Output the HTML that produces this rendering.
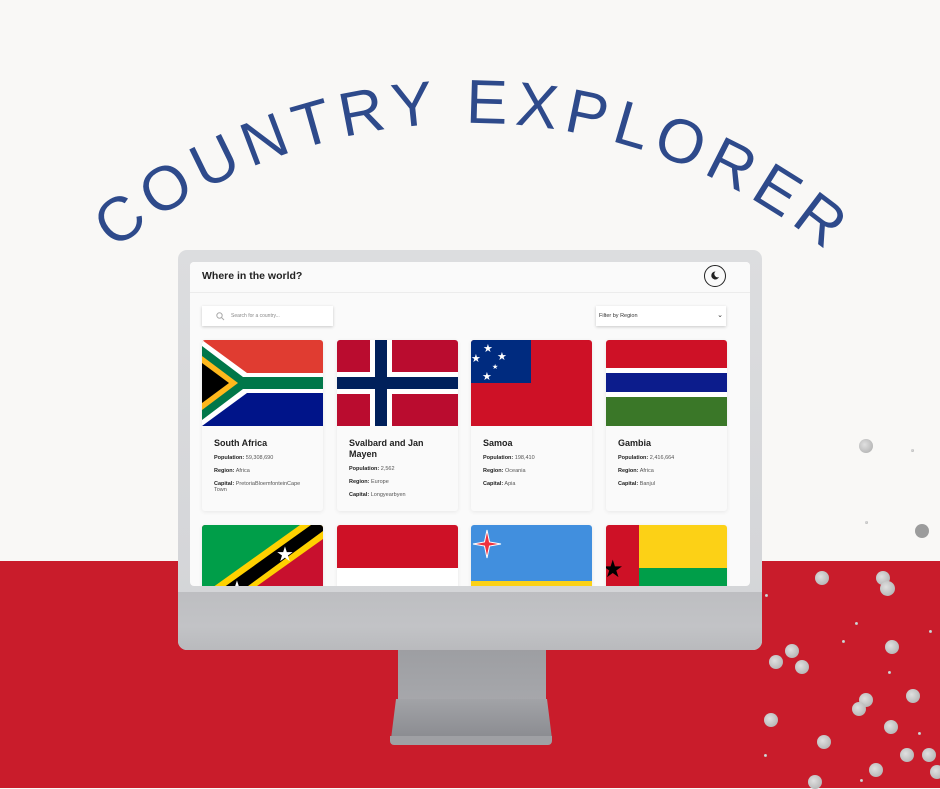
<!DOCTYPE html>
<html><head><meta charset="utf-8"><style>
*{margin:0;padding:0;box-sizing:border-box}
body{width:940px;height:788px;overflow:hidden;background:#f9f8f6;position:relative;font-family:"Liberation Sans",sans-serif}
.abs{position:absolute}
.red{left:0;top:561px;width:940px;height:227px;background:#c91c2b}
.bezel{left:178px;top:250px;width:584px;height:400px;border-radius:9px;background:linear-gradient(#dcdddf,#d3d4d7);}
.chin{left:178px;top:592px;width:584px;height:58px;border-radius:0 0 9px 9px;background:linear-gradient(#bdbec1,#c2c3c6 60%,#b9babd)}
.screen{left:190px;top:262px;width:560px;height:324px;background:#fafafa;border-radius:4px;overflow:hidden}
.hdr{left:0;top:0;width:560px;height:31px;background:#fafafa;border-bottom:1px solid #ececec}
.hdr h1{position:absolute;left:12px;top:8px;font-size:10.5px;font-weight:bold;color:#222}
.moon{left:514px;top:3px;width:22px;height:22px;border:1.5px solid #222;border-radius:50%}
.search{left:12px;top:44px;width:131px;height:20px;background:#fff;box-shadow:0 1px 3px rgba(0,0,0,.2);font-size:5px;color:#888;padding:7px 0 0 29px}
.sel{left:406px;top:44px;width:130px;height:20px;background:#fff;box-shadow:0 1px 3px rgba(0,0,0,.2);font-size:5.5px;color:#333;padding:7px 0 0 3px}
.card{width:121px;height:171px;background:#fafafa;box-shadow:0 1px 4px rgba(0,0,0,.08);border-radius:3px;overflow:hidden}
.card svg{display:block}
.card h2{font-size:9px;font-weight:bold;color:#222;margin:12px 0 0 12px;line-height:11px;width:100px}
.card p{font-size:5.5px;color:#555;margin:6px 0 0 12px;line-height:7px;width:100px}
.card p b{color:#222}
.dot{position:absolute;border-radius:50%;background:radial-gradient(circle at 40% 40%,#e0e0e0,#a9a9a9)}
</style></head><body>
<div class="abs red"></div>
<svg class="abs" style="left:0;top:0" width="940" height="300">
<defs><path id="arc" d="M74,287 A560,560 0 0 1 866,287"/></defs>
<text font-family="Liberation Sans, sans-serif" font-size="62" fill="#2e4a8b" text-anchor="middle" textLength="770" lengthAdjust="spacing"><textPath href="#arc" startOffset="50%">COUNTRY EXPLORER</textPath></text>
</svg>
<!-- stand -->
<div class="abs" style="left:398px;top:648px;width:148px;height:52px;background:linear-gradient(#9d9ea2,#a6a7ab)"></div>
<div class="abs" style="left:391px;top:699px;width:161px;height:40px;background:linear-gradient(#a2a3a7,#8a8b90);clip-path:polygon(5px 0,156px 0,161px 40px,0 40px)"></div>
<div class="abs" style="left:390px;top:736px;width:162px;height:9px;border-radius:0 0 4px 4px;background:#9fa0a4"></div>
<div class="abs bezel"></div>
<div class="abs chin"></div>
<div class="abs screen">
 <div class="abs hdr"><h1>Where in the world?</h1>
  <div class="abs moon"><svg width="19" height="19" viewBox="0 0 19 19"><path d="M10.5 5.5a4 4 0 1 0 3.5 5.5a3.3 3.3 0 0 1-3.5-5.5z" fill="#222"/></svg></div></div>
 <div class="abs search"><svg class="abs" style="left:14px;top:6px" width="9" height="9"><circle cx="3.5" cy="3.5" r="2.7" fill="none" stroke="#aaa" stroke-width="1"/><path d="M5.5 5.5L8 8" stroke="#aaa"/></svg>Search for a country...</div>
 <div class="abs sel">Filter by Region<span style="position:absolute;right:3px;top:5px;font-size:7px">&#8964;</span></div>
 <div class="abs card" style="left:12px;top:78px">
  <svg width="121" height="86" viewBox="0 0 121 86" preserveAspectRatio="none">
   <rect width="121" height="43" fill="#e03c31"/><rect y="43" width="121" height="43" fill="#001489"/>
   <path d="M0 0L45 33H121V53H45L0 86Z" fill="#fff"/><path d="M0 6L41 37H121V49H41L0 80Z" fill="#007749"/>
   <path d="M0 16L36 43L0 70Z" fill="#ffb81c"/><path d="M0 23L27 43L0 63Z" fill="#000"/></svg>
  <h2>South Africa</h2><p><b>Population:</b> 59,308,690</p><p><b>Region:</b> Africa</p><p style="line-height:6px"><b>Capital:</b> PretoriaBloemfonteinCape Town</p></div>
 <div class="abs card" style="left:147px;top:78px">
  <svg width="121" height="86" viewBox="0 0 121 86" preserveAspectRatio="none">
   <rect width="121" height="86" fill="#ba0c2f"/><rect x="33" width="22" height="86" fill="#fff"/><rect y="32" width="121" height="22" fill="#fff"/>
   <rect x="38" width="12" height="86" fill="#00205b"/><rect y="37" width="121" height="12" fill="#00205b"/></svg>
  <h2>Svalbard and Jan Mayen</h2><p><b>Population:</b> 2,562</p><p><b>Region:</b> Europe</p><p><b>Capital:</b> Longyearbyen</p></div>
 <div class="abs card" style="left:281px;top:78px">
  <svg width="121" height="86" viewBox="0 0 121 86" preserveAspectRatio="none">
   <rect width="121" height="86" fill="#ce1126"/><rect width="60" height="43" fill="#002b7f"/>
   <g fill="#fff" font-size="11" font-family="DejaVu Sans"><text x="12" y="12">★</text><text x="26" y="20">★</text><text x="0" y="22">★</text><text x="21" y="29" font-size="7">★</text><text x="11" y="40">★</text></g></svg>
  <h2>Samoa</h2><p><b>Population:</b> 198,410</p><p><b>Region:</b> Oceania</p><p><b>Capital:</b> Apia</p></div>
 <div class="abs card" style="left:416px;top:78px">
  <svg width="121" height="86" viewBox="0 0 121 86" preserveAspectRatio="none">
   <rect width="121" height="86" fill="#fff"/><rect width="121" height="28" fill="#ce1126"/><rect y="33" width="121" height="19" fill="#0c1c8c"/><rect y="57" width="121" height="29" fill="#3a7728"/></svg>
  <h2>Gambia</h2><p><b>Population:</b> 2,416,664</p><p><b>Region:</b> Africa</p><p><b>Capital:</b> Banjul</p></div>
 <div class="abs card" style="left:12px;top:263px">
  <svg width="121" height="86" viewBox="0 0 121 86" preserveAspectRatio="none">
   <rect width="121" height="86" fill="#c8102e"/><path d="M0 0H121L0 86Z" fill="#009e49"/>
   <path d="M0 70L98 0H121V14L20 86H0Z" fill="#ffd100"/><path d="M0 78L109 0H121V6L12 86H0Z" fill="#000"/>
   <g fill="#fff" font-size="20" font-family="DejaVu Sans"><text x="74" y="36">★</text><text x="26" y="70">★</text></g></svg></div>
 <div class="abs card" style="left:147px;top:263px">
  <svg width="121" height="86" viewBox="0 0 121 86" preserveAspectRatio="none"><rect width="121" height="43" fill="#ce1126"/><rect y="43" width="121" height="43" fill="#fff"/></svg></div>
 <div class="abs card" style="left:281px;top:263px">
  <svg width="121" height="86" viewBox="0 0 121 86" preserveAspectRatio="none"><rect width="121" height="86" fill="#418fde"/><rect y="56" width="121" height="5" fill="#fbd116"/>
   <path d="M16 5L18.5 17L30 19L18.5 21L16 33L13.5 21L2 19L13.5 17Z" fill="#ef3340" stroke="#fff" stroke-width="1"/></svg></div>
 <div class="abs card" style="left:416px;top:263px">
  <svg width="121" height="86" viewBox="0 0 121 86" preserveAspectRatio="none"><rect width="33" height="86" fill="#ce1126"/><rect x="33" width="88" height="43" fill="#fcd116"/><rect x="33" y="43" width="88" height="43" fill="#009e49"/>
   <text x="-4" y="52" font-size="24" font-family="DejaVu Sans" fill="#000">★</text></svg></div>
</div>
<div class="dot" style="left:859px;top:439px;width:14px;height:14px"></div>
<div class="dot" style="left:915px;top:524px;width:14px;height:14px;background:#9c9c9c"></div>
<div class="dot" style="left:911px;top:449px;width:3px;height:3px"></div>
<div class="dot" style="left:865px;top:521px;width:3px;height:3px"></div>
<div class="dot" style="left:815px;top:571px;width:14px;height:14px"></div>
<div class="dot" style="left:876px;top:571px;width:14px;height:14px"></div>
<div class="dot" style="left:880px;top:581px;width:15px;height:15px"></div>
<div class="dot" style="left:785px;top:644px;width:14px;height:14px"></div>
<div class="dot" style="left:769px;top:655px;width:14px;height:14px"></div>
<div class="dot" style="left:795px;top:660px;width:14px;height:14px"></div>
<div class="dot" style="left:885px;top:640px;width:14px;height:14px"></div>
<div class="dot" style="left:859px;top:693px;width:14px;height:14px"></div>
<div class="dot" style="left:852px;top:702px;width:14px;height:14px"></div>
<div class="dot" style="left:906px;top:689px;width:14px;height:14px"></div>
<div class="dot" style="left:764px;top:713px;width:14px;height:14px"></div>
<div class="dot" style="left:817px;top:735px;width:14px;height:14px"></div>
<div class="dot" style="left:884px;top:720px;width:14px;height:14px"></div>
<div class="dot" style="left:900px;top:748px;width:14px;height:14px"></div>
<div class="dot" style="left:922px;top:748px;width:14px;height:14px"></div>
<div class="dot" style="left:869px;top:763px;width:14px;height:14px"></div>
<div class="dot" style="left:808px;top:775px;width:14px;height:14px"></div>
<div class="dot" style="left:930px;top:765px;width:14px;height:14px"></div>
<div class="dot" style="left:765px;top:594px;width:3px;height:3px"></div>
<div class="dot" style="left:855px;top:622px;width:3px;height:3px"></div>
<div class="dot" style="left:842px;top:640px;width:3px;height:3px"></div>
<div class="dot" style="left:929px;top:630px;width:3px;height:3px"></div>
<div class="dot" style="left:888px;top:671px;width:3px;height:3px"></div>
<div class="dot" style="left:764px;top:754px;width:3px;height:3px"></div>
<div class="dot" style="left:918px;top:732px;width:3px;height:3px"></div>
<div class="dot" style="left:860px;top:779px;width:3px;height:3px"></div>
</body></html>
